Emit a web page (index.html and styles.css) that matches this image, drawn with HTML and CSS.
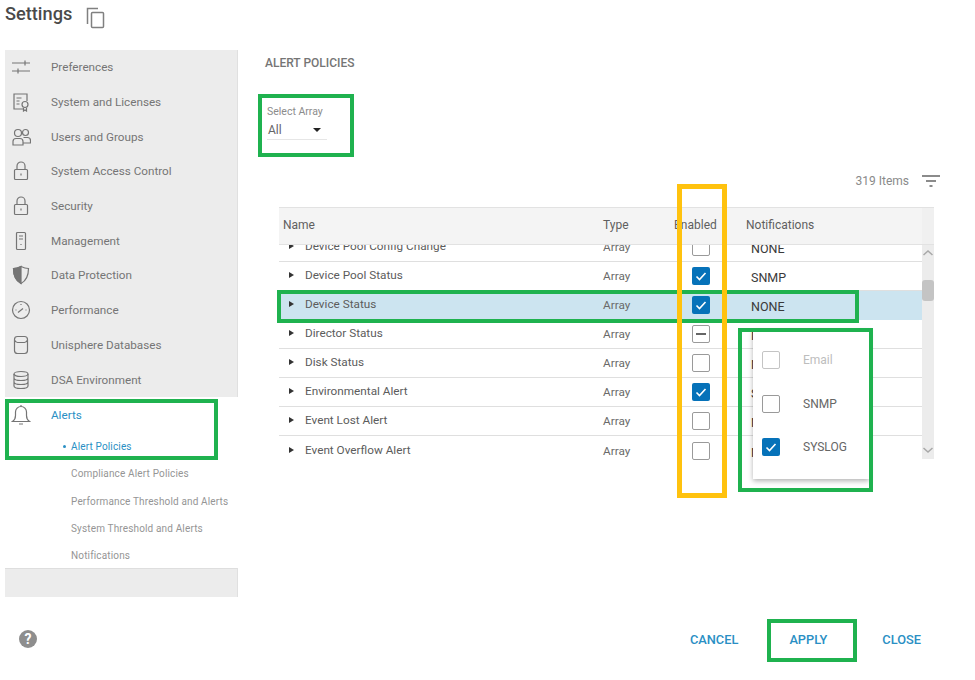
FILE: index.html
```html
<!DOCTYPE html>
<html lang="en">
  <head>
    <meta charset="UTF-8" />
    <title>Settings</title>
    <link rel="stylesheet" href="styles.css">
  </head>

  <body>
    <div class="page">
      <header class="top">
        <h1 class="title">Settings</h1>
        <svg class="copy" width="20" height="22" viewBox="0 0 20 22">
          <path d="M2.500 17V1.500H13" />
          <rect x="6.500" y="5.500" width="12" height="15" rx="1" />
        </svg>
      </header>

      <div class="main">
        <nav class="side">
          <ul class="nav">
            <li class="nav-item">
              <svg class="ico" viewBox="0 0 20 20"><path d="M1 6h18M1 14h18M14 3.500v5M7 11.500v5" /></svg>
              Preferences
            </li>
            <li class="nav-item">
              <svg class="ico" viewBox="0 0 20 20"><path d="M12 17H3V2h13v7M5.500 6h5M5.500 9h3M5.500 12h3" /><circle cx="14" cy="12.500" r="3" /><path d="M12.500 16v3l1.500-1 1.500 1v-3" /></svg>
              System and Licenses
            </li>
            <li class="nav-item">
              <svg class="ico" viewBox="0 0 20 20"><circle cx="7" cy="6" r="3.500" /><circle cx="14.500" cy="5.500" r="3" /><path d="M2 18v-3.500q0-3 3-3h4q3 0 3 3V18zM12.500 10.500h4q3 0 3 3v2.500H12" /></svg>
              Users and Groups
            </li>
            <li class="nav-item">
              <svg class="ico" viewBox="0 0 20 20"><rect x="3.500" y="8.500" width="13" height="10" rx="1" /><path d="M6 8.500V5a4 4 0 0 1 8 0v3.500M10 12.500v2" /></svg>
              System Access Control
            </li>
            <li class="nav-item">
              <svg class="ico" viewBox="0 0 20 20"><rect x="3.500" y="8.500" width="13" height="10" rx="1" /><path d="M6 8.500V5a4 4 0 0 1 8 0v3.500M10 12.500v2" /></svg>
              Security
            </li>
            <li class="nav-item">
              <svg class="ico" viewBox="0 0 20 20"><rect x="5.500" y="1.500" width="9" height="17" rx="1" /><path d="M8 5h4M8 8h4M10 13v1" /></svg>
              Management
            </li>
            <li class="nav-item">
              <svg class="ico" viewBox="0 0 20 20"><path d="M10 1.500q4 2 7.500 2 0 11-7.500 15-7.500-4-7.500-15 3.500 0 7.500-2z" /><path class="fill" d="M10 1.500q-4 2-7.500 2 0 11 7.500 15z" /></svg>
              Data Protection
            </li>
            <li class="nav-item">
              <svg class="ico" viewBox="0 0 20 20"><circle cx="10" cy="10" r="8.500" /><path d="M7 12.500l5-4M10 4v1M4.500 10h1M14.500 10h1" /></svg>
              Performance
            </li>
            <li class="nav-item">
              <svg class="ico" viewBox="0 0 20 20"><path d="M3.500 4.500q0-3 3-3h7q3 0 3 3v11q0 3-3 3h-7q-3 0-3-3zM3.500 5q1 2.500 3 2.500h7q2 0 3-2.500" /></svg>
              Unisphere Databases
            </li>
            <li class="nav-item">
              <svg class="ico" viewBox="0 0 20 20"><ellipse cx="10" cy="4" rx="7" ry="2.500" /><path d="M3 4v12c0 1.500 3 2.500 7 2.500s7-1 7-2.500V4M3 8c0 1.500 3 2.500 7 2.500s7-1 7-2.500M3 12c0 1.500 3 2.500 7 2.500s7-1 7-2.500" /></svg>
              DSA Environment
            </li>
          </ul>

          <div class="alerts">
            <div class="nav-item active">
              <svg class="ico" viewBox="0 0 20 20"><path d="M1.500 16.500q3-2 3-6V7a5.500 5.500 0 0 1 11 0v3.500q0 4 3 6zM8 19h4M10 1.500V0" /></svg>
              Alerts
            </div>
            <ul class="sub">
              <li class="sub-item current">Alert Policies</li>
              <li class="sub-item">Compliance Alert Policies</li>
              <li class="sub-item">Performance Threshold and Alerts</li>
              <li class="sub-item">System Threshold and Alerts</li>
              <li class="sub-item">Notifications</li>
            </ul>
          </div>
          <div class="side-end"></div>
        </nav>

        <section class="content">
          <h2 class="heading">ALERT POLICIES</h2>

          <div class="select">
            <div class="select-label">Select Array</div>
            <div class="select-value">All <span class="caret"></span></div>
          </div>

          <div class="toolbar">
            <span class="count">319 Items</span>
            <svg class="filter" width="18" height="12" viewBox="0 0 18 12"><path d="M0 1h18M4 6h10M7.500 11h3" /></svg>
          </div>

          <div class="table">
            <div class="thead">
              <div class="thead-row">
                <span>Name</span>
                <span>Type</span>
                <span>Enabled</span>
                <span>Notifications</span>
              </div>
              <div class="thead-end"></div>
            </div>
            <div class="tbody">
              <div class="rows">
                <div class="row first">
                  <span class="name"><i class="arrow"></i>Device Pool Config Change</span>
                  <span class="type">Array</span>
                  <span class="box"></span>
                  <span class="notif">NONE</span>
                </div>
                <div class="row">
                  <span class="name"><i class="arrow"></i>Device Pool Status</span>
                  <span class="type">Array</span>
                  <span class="box on"><svg viewBox="0 0 18 18"><path d="M4.500 9.500l3 3 6-6.500" /></svg></span>
                  <span class="notif">SNMP</span>
                </div>
                <div class="row selected">
                  <span class="name"><i class="arrow"></i>Device Status</span>
                  <span class="type">Array</span>
                  <span class="box on"><svg viewBox="0 0 18 18"><path d="M4.500 9.500l3 3 6-6.500" /></svg></span>
                  <span class="notif">NONE</span>
                </div>
                <div class="row">
                  <span class="name"><i class="arrow"></i>Director Status</span>
                  <span class="type">Array</span>
                  <span class="box mixed"></span>
                  <span class="notif">NONE</span>
                </div>
                <div class="row">
                  <span class="name"><i class="arrow"></i>Disk Status</span>
                  <span class="type">Array</span>
                  <span class="box"></span>
                  <span class="notif">NONE</span>
                </div>
                <div class="row">
                  <span class="name"><i class="arrow"></i>Environmental Alert</span>
                  <span class="type">Array</span>
                  <span class="box on"><svg viewBox="0 0 18 18"><path d="M4.500 9.500l3 3 6-6.500" /></svg></span>
                  <span class="notif">SYSLOG</span>
                </div>
                <div class="row">
                  <span class="name"><i class="arrow"></i>Event Lost Alert</span>
                  <span class="type">Array</span>
                  <span class="box"></span>
                  <span class="notif">NONE</span>
                </div>
                <div class="row last">
                  <span class="name"><i class="arrow"></i>Event Overflow Alert</span>
                  <span class="type">Array</span>
                  <span class="box"></span>
                  <span class="notif">NONE</span>
                </div>
              </div>
              <div class="scroll">
                <svg class="chev" width="12" height="8" viewBox="0 0 12 8"><path d="M1.500 6L6 2l4.500 4" /></svg>
                <div class="thumb"></div>
                <svg class="chev down" width="12" height="8" viewBox="0 0 12 8"><path d="M1.500 2L6 6l4.500-4" /></svg>
              </div>
            </div>
          </div>
        </section>
      </div>

      <footer class="foot">
        <span class="help">?</span>
        <div class="actions">
          <a class="action">CANCEL</a>
          <a class="action">APPLY</a>
          <a class="action">CLOSE</a>
        </div>
      </footer>

      <div class="popup">
        <label class="opt disabled"><span class="box"></span>Email</label>
        <label class="opt"><span class="box"></span>SNMP</label>
        <label class="opt"><span class="box on"><svg viewBox="0 0 18 18"><path d="M4.500 9.500l3 3 6-6.500" /></svg></span>SYSLOG</label>
      </div>

      <!-- annotation frames drawn over the screenshot -->
      <div class="frame green f-alerts"></div>
      <div class="frame green f-select"></div>
      <div class="frame green f-row"></div>
      <div class="frame green f-popup"></div>
      <div class="frame green f-apply"></div>
      <div class="frame yellow f-enabled"></div>
    </div>
  </body>
</html>
```

FILE: styles.css
```css
* {
  margin: 0;
  padding: 0;
  box-sizing: border-box;
}

body {
  font-family: Roboto, "Liberation Sans", sans-serif;
  background-color: #ffffff;
  color: #555555;
}

ul {
  list-style: none;
}

.page {
  position: relative;
  width: 975px;
  height: 680px;
  overflow: hidden;
}

/* header */
.top {
  display: flex;
  align-items: flex-start;
  height: 50px;
  padding: 3px 0 0 5px;
  gap: 13px;
}

.title {
  font-size: 18.2px;
  font-weight: 500;
  line-height: 22px;
  color: #4a4a4a;
}

.copy {
  margin-top: 4px;
  fill: none;
  stroke: #808080;
  stroke-width: 1.5;
}

.main {
  display: flex;
  height: 547px;
}

/* left menu */
.side {
  width: 233px;
  margin-left: 5px;
  display: flex;
  flex-direction: column;
}

.nav {
  background-color: #ececec;
  border-right: 1px solid #e0e0e0;
  height: 347px;
}

.nav-item {
  display: flex;
  align-items: center;
  gap: 20px;
  height: 34.7px;
  padding-left: 6px;
  font-size: 11.7px;
  color: #757575;
}

.ico {
  width: 20px;
  height: 20px;
  flex: none;
  fill: none;
  stroke: #757575;
  stroke-width: 1.2;
}

.ico .fill {
  fill: #757575;
}

.alerts {
  height: 171px;
}

.nav-item.active {
  height: 36px;
  color: #2a8fc4;
}

.sub {
  padding-left: 66px;
}

.sub-item {
  position: relative;
  height: 27.3px;
  line-height: 27.3px;
  font-size: 10px;
  letter-spacing: 0.15px;
  color: #959595;
  white-space: nowrap;
}

.sub-item.current {
  color: #2a8fc4;
}

.sub-item.current::before {
  content: "";
  position: absolute;
  left: -8px;
  top: 12px;
  width: 3px;
  height: 3px;
  border-radius: 50%;
  background-color: #2a8fc4;
}

.side-end {
  height: 29px;
  background-color: #ececec;
  border-top: 1px solid #dedede;
  border-right: 1px solid #e0e0e0;
}

/* right part */
.content {
  flex: 1;
  padding-left: 41px;
}

.heading {
  font-size: 12px;
  font-weight: 500;
  line-height: 14px;
  color: #757575;
  margin: 6px 0 0 -14px;
}

.select {
  width: 60px;
  height: 34px;
  margin: 36px 0 0 -12px;
  border-bottom: 1px solid #e6e6e6;
}

.select-label {
  font-size: 10.5px;
  line-height: 12px;
  color: #8c8c8c;
}

.select-value {
  display: flex;
  justify-content: space-between;
  align-items: center;
  font-size: 12px;
  line-height: 16px;
  margin-top: 4px;
  padding: 0 6px 0 1px;
  color: #666666;
}

.caret {
  width: 0;
  height: 0;
  border-left: 4px solid transparent;
  border-right: 4px solid transparent;
  border-top: 4px solid #222222;
}

.toolbar {
  display: flex;
  justify-content: flex-end;
  align-items: center;
  gap: 13px;
  margin: 33px 35px 0 0;
  height: 16px;
}

.count {
  font-size: 12px;
  color: #8a8a8a;
}

.filter {
  fill: none;
  stroke: #666666;
  stroke-width: 1.6;
}

.table {
  margin-top: 18px;
  width: 655px;
}

.thead {
  display: flex;
  height: 38px;
  background-color: #f4f4f4;
  border-top: 1px solid #e2e2e2;
  border-bottom: 1px solid #e2e2e2;
}

.thead-row {
  display: grid;
  grid-template-columns: 320px 71px 72px 1fr;
  align-items: center;
  flex: 1;
  padding: 0 0 2px 4px;
  font-size: 12px;
  color: #5f5f5f;
}

.thead-end {
  width: 12px;
  background-color: #f0f0f0;
}

.tbody {
  display: flex;
  align-items: flex-start;
  height: 217px;
}

.rows {
  flex: 1;
  height: 217px;
  overflow: hidden;
}

.row {
  display: grid;
  grid-template-columns: 324px 89px 59px 1fr;
  align-items: center;
  height: 29px;
  padding-left: 10px;
  border-bottom: 1px solid #dfdfdf;
  font-size: 11.75px;
  color: #5c5c5c;
}

.row.first {
  margin-top: -12px;
}

.row.selected {
  background-color: #cce4f0;
  border-bottom-color: #cce4f0;
}

.row.last {
  border-bottom: none;
}

.name {
  display: flex;
  align-items: center;
  gap: 11px;
  margin-top: -2px;
}

.row .type {
  margin-left: -10px;
  color: #6a6a6a;
}

.row .box {
  margin-left: -10px;
}

.row .notif {
  margin: 3px 0 0 -10px;
  font-size: 12.5px;
  color: #3a3a3a;
}

.arrow {
  display: block;
  width: 0;
  height: 0;
  border-top: 3px solid transparent;
  border-bottom: 3px solid transparent;
  border-left: 5px solid #333333;
}

.box {
  display: block;
  width: 18px;
  height: 18px;
  flex: none;
  background-color: #ffffff;
  border: 1.5px solid #9a9a9a;
  border-radius: 2px;
}

.box.on {
  background-color: #0672b9;
  border: none;
}

.box svg {
  display: block;
  fill: none;
  stroke: #ffffff;
  stroke-width: 1.6;
}

.box.mixed {
  position: relative;
}

.box.mixed::after {
  content: "";
  position: absolute;
  left: 3px;
  right: 3px;
  top: 7px;
  height: 1.5px;
  background-color: #666666;
}

.scroll {
  position: relative;
  width: 12px;
  height: 214px;
  background-color: #ececec;
}

.chev {
  position: absolute;
  left: 0;
  top: 4px;
  fill: none;
  stroke: #a8a8a8;
  stroke-width: 1.5;
}

.chev.down {
  top: auto;
  bottom: 5px;
}

.thumb {
  position: absolute;
  left: 0;
  top: 35px;
  width: 12px;
  height: 21px;
  border-radius: 3px;
  background-color: #c4c4c4;
}

/* bottom row */
.foot {
  display: flex;
  justify-content: space-between;
  align-items: center;
  height: 84px;
  padding: 0 54px 0 19px;
}

.help {
  width: 18px;
  height: 18px;
  border-radius: 50%;
  background-color: #8e8e8e;
  color: #ffffff;
  font-size: 14px;
  font-weight: 700;
  line-height: 18px;
  text-align: center;
}

.actions {
  display: flex;
  gap: 51px;
}

.action {
  font-size: 12.8px;
  font-weight: 500;
  color: #2a8fc4;
}

.action:last-child {
  margin-left: 4px;
}

/* notifications dropdown */
.popup {
  position: absolute;
  left: 753px;
  top: 330px;
  width: 116px;
  height: 149px;
  padding-top: 21px;
  background-color: #ffffff;
  box-shadow: 0 2px 5px rgba(0, 0, 0, 0.3);
}

.opt {
  display: flex;
  align-items: center;
  gap: 23px;
  height: 18px;
  margin-bottom: 25.5px;
  padding-left: 9px;
  font-size: 12px;
  color: #666666;
}

.opt.disabled {
  color: #bdbdbd;
}

.opt.disabled .box {
  border-color: #c4c4c4;
}

/* highlight frames */
.frame {
  position: absolute;
  border-style: solid;
  border-width: 4px;
  pointer-events: none;
}

.green {
  border-color: #1fb24f;
}

.yellow {
  border-color: #ffc20e;
  border-width: 5px;
}

.f-alerts {
  left: 5px;
  top: 399px;
  width: 213px;
  height: 61px;
}

.f-select {
  left: 258px;
  top: 94px;
  width: 96px;
  height: 63px;
}

.f-row {
  left: 277px;
  top: 290px;
  width: 582px;
  height: 33px;
}

.f-popup {
  left: 738px;
  top: 328px;
  width: 135px;
  height: 164px;
}

.f-apply {
  left: 767px;
  top: 619px;
  width: 90px;
  height: 43px;
}

.f-enabled {
  left: 677px;
  top: 184px;
  width: 50px;
  height: 314px;
}
```
